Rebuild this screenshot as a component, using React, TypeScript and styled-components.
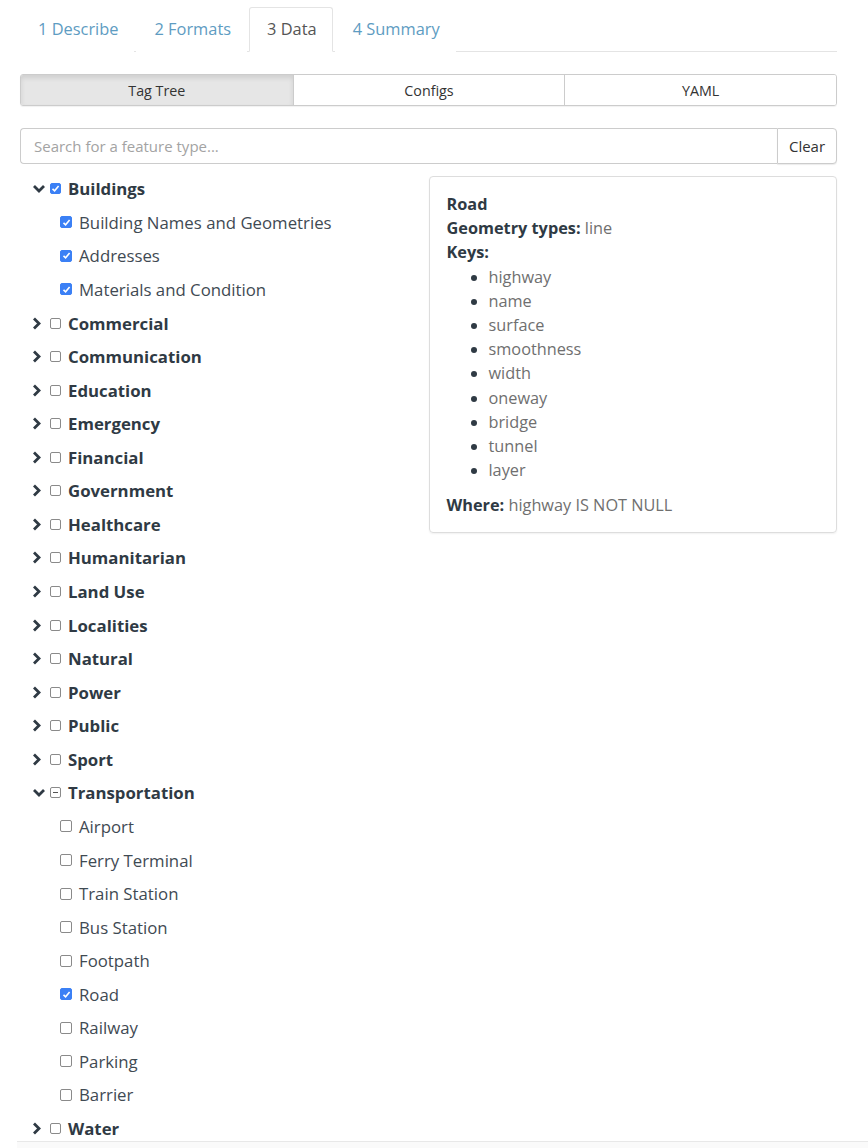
import React from 'react';
import styled, { createGlobalStyle } from 'styled-components';

const COLORS = {
  link: '#5e9cc2',
  text: '#555555',
  dark: '#2f3a44',
  body: '#3f4a53',
  muted: '#6f6f6f',
  border: '#dddddd',
  inputBorder: '#cccccc',
  blue: '#3b80f5',
};

const GlobalStyle = createGlobalStyle`
  html, body {
    margin: 0;
    padding: 0;
    background: #ffffff;
    font-family: 'Open Sans', 'Liberation Sans', sans-serif;
  }
  * { box-sizing: border-box; }
`;

const Page = styled.div`
  padding: 7px 31px 0 20px;
`;

const TabBar = styled.ul`
  display: flex;
  list-style: none;
  margin: 0;
  padding: 0;
  border-bottom: 1px solid #e4e4e4;
`;

const Tab = styled.li<{ $active?: boolean }>`
  height: 45px;
  margin-right: 2px;
  margin-bottom: -1px;
  padding: 0 15px 2px 17px;
  display: flex;
  align-items: center;
  font-size: 16.4px;
  color: ${(p) => (p.$active ? COLORS.text : COLORS.link)};
  background: #fff;
  border: 1px solid ${(p) => (p.$active ? '#e4e4e4' : 'transparent')};
  border-bottom-color: ${(p) => (p.$active ? '#fff' : 'transparent')};
  border-radius: 3px 3px 0 0;
`;

const Segmented = styled.div`
  display: grid;
  grid-template-columns: 1fr 1fr 1fr;
  margin-top: 22px;
  height: 32px;
  border: 1px solid ${COLORS.inputBorder};
  border-radius: 3px;
  overflow: hidden;
  box-shadow: 0 1px 1px rgba(0, 0, 0, 0.06);
`;

const SegButton = styled.div<{ $active?: boolean }>`
  display: flex;
  align-items: center;
  justify-content: center;
  font-size: 14.3px;
  color: #333;
  background: ${(p) => (p.$active ? '#e6e6e6' : '#fff')};
  box-shadow: ${(p) => (p.$active ? 'inset 0 3px 5px rgba(0,0,0,0.1)' : 'none')};
  & + & {
    border-left: 1px solid ${COLORS.inputBorder};
  }
`;

const SearchGroup = styled.div`
  display: flex;
  margin-top: 22px;
  height: 36px;
`;

const SearchInput = styled.input`
  flex: 1;
  height: 100%;
  border: 1px solid ${COLORS.inputBorder};
  border-right: none;
  border-radius: 4px 0 0 4px;
  padding: 0 13px;
  font-family: inherit;
  font-size: 15px;
  color: #333;
  outline: none;
  &::placeholder {
    color: #a3a3a3;
  }
`;

const ClearButton = styled.button`
  width: 60px;
  height: 100%;
  border: 1px solid ${COLORS.inputBorder};
  border-radius: 0 4px 4px 0;
  background: #fff;
  font-family: inherit;
  font-size: 15px;
  color: #333;
  box-shadow: 0 1px 1px rgba(0, 0, 0, 0.08);
  padding: 0;
`;

const Columns = styled.div`
  display: grid;
  grid-template-columns: 1fr 1fr;
`;

const Tree = styled.div`
  padding-top: 8px;
`;

const Row = styled.div<{ $child?: boolean }>`
  display: flex;
  align-items: center;
  height: 33.57px;
  padding-left: ${(p) => (p.$child ? '40px' : '12px')};
`;

const Chevron = styled.span`
  width: 14px;
  height: 14px;
  margin-right: 4px;
  display: flex;
  align-items: center;
  justify-content: flex-start;
`;

const Box = styled.span<{ $state: 'on' | 'off' | 'mixed'; $child?: boolean }>`
  width: ${(p) => (p.$child ? '12px' : '11px')};
  height: ${(p) => (p.$child ? '12px' : '11px')};
  margin-right: 7px;
  border-radius: 2px;
  display: flex;
  align-items: center;
  justify-content: center;
  flex: none;
  background: ${(p) => (p.$state === 'on' ? COLORS.blue : '#fff')};
  border: 1px solid ${(p) => (p.$state === 'on' ? COLORS.blue : '#8a8a8a')};
`;

const Label = styled.span<{ $bold?: boolean }>`
  font-size: 16.8px;
  font-weight: ${(p) => (p.$bold ? 700 : 400)};
  color: ${(p) => (p.$bold ? COLORS.dark : COLORS.body)};
  white-space: nowrap;
`;

const Panel = styled.div`
  align-self: start;
  margin-top: 12px;
  border: 1px solid ${COLORS.border};
  border-radius: 4px;
  box-shadow: 0 1px 2px rgba(0, 0, 0, 0.06);
  padding: 15px 17px 14px 17px;
  font-size: 16.3px;
  line-height: 24.2px;
  color: ${COLORS.muted};
`;

const Line = styled.div``;

const Strong = styled.b`
  color: ${COLORS.dark};
  font-weight: 700;
`;

const KeyList = styled.ul`
  margin: 0 0 11px 0;
  padding-left: 42px;
  li::marker {
    color: ${COLORS.dark};
  }
`;

const Footer = styled.div`
  position: fixed;
  left: 17px;
  right: 0;
  bottom: 0;
  height: 7px;
  border-top: 1px solid #e8e8e8;
  background: #fafafa;
`;

type Check = 'on' | 'off' | 'mixed';

const ChevronIcon = ({ open }: { open: boolean }) =>
  open ? (
    <svg width="14" height="10" viewBox="0 0 14 10">
      <polyline points="2,2 7,7 12,2" fill="none" stroke="#2f3a44" strokeWidth="2.8" />
    </svg>
  ) : (
    <svg width="10" height="13" viewBox="0 0 10 13">
      <polyline points="2,1.5 7,6.5 2,11.5" fill="none" stroke="#2f3a44" strokeWidth="2.8" />
    </svg>
  );

const CheckBox = ({ state, child }: { state: Check; child?: boolean }) => (
  <Box $state={state} $child={child}>
    {state === 'on' && (
      <svg width="9" height="9" viewBox="0 0 9 9">
        <polyline points="1.5,4.8 3.6,6.8 7.6,2" fill="none" stroke="#fff" strokeWidth="1.6" />
      </svg>
    )}
    {state === 'mixed' && (
      <svg width="7" height="7" viewBox="0 0 7 7">
        <line x1="1" y1="3.5" x2="6" y2="3.5" stroke="#555" strokeWidth="1" />
      </svg>
    )}
  </Box>
);

type Group = { name: string; state: Check; open?: boolean; children?: { name: string; on?: boolean }[] };

const groups: Group[] = [
  {
    name: 'Buildings',
    state: 'on',
    open: true,
    children: [
      { name: 'Building Names and Geometries', on: true },
      { name: 'Addresses', on: true },
      { name: 'Materials and Condition', on: true },
    ],
  },
  { name: 'Commercial', state: 'off' },
  { name: 'Communication', state: 'off' },
  { name: 'Education', state: 'off' },
  { name: 'Emergency', state: 'off' },
  { name: 'Financial', state: 'off' },
  { name: 'Government', state: 'off' },
  { name: 'Healthcare', state: 'off' },
  { name: 'Humanitarian', state: 'off' },
  { name: 'Land Use', state: 'off' },
  { name: 'Localities', state: 'off' },
  { name: 'Natural', state: 'off' },
  { name: 'Power', state: 'off' },
  { name: 'Public', state: 'off' },
  { name: 'Sport', state: 'off' },
  {
    name: 'Transportation',
    state: 'mixed',
    open: true,
    children: [
      { name: 'Airport' },
      { name: 'Ferry Terminal' },
      { name: 'Train Station' },
      { name: 'Bus Station' },
      { name: 'Footpath' },
      { name: 'Road', on: true },
      { name: 'Railway' },
      { name: 'Parking' },
      { name: 'Barrier' },
    ],
  },
  { name: 'Water', state: 'off' },
];

const roadKeys = ['highway', 'name', 'surface', 'smoothness', 'width', 'oneway', 'bridge', 'tunnel', 'layer'];

const App: React.FC = () => (
  <Page>
    <GlobalStyle />
    <TabBar>
      <Tab>1 Describe</Tab>
      <Tab>2 Formats</Tab>
      <Tab $active>3 Data</Tab>
      <Tab>4 Summary</Tab>
    </TabBar>

    <Segmented>
      <SegButton $active>Tag Tree</SegButton>
      <SegButton>Configs</SegButton>
      <SegButton>YAML</SegButton>
    </Segmented>

    <SearchGroup>
      <SearchInput placeholder="Search for a feature type..." />
      <ClearButton>Clear</ClearButton>
    </SearchGroup>

    <Columns>
      <Tree>
        {groups.map((g) => (
          <React.Fragment key={g.name}>
            <Row>
              <Chevron>
                <ChevronIcon open={!!g.open} />
              </Chevron>
              <CheckBox state={g.state} />
              <Label $bold>{g.name}</Label>
            </Row>
            {g.open &&
              g.children?.map((c) => (
                <Row $child key={c.name}>
                  <CheckBox state={c.on ? 'on' : 'off'} child />
                  <Label>{c.name}</Label>
                </Row>
              ))}
          </React.Fragment>
        ))}
      </Tree>

      <Panel>
        <Line>
          <Strong>Road</Strong>
        </Line>
        <Line>
          <Strong>Geometry types:</Strong> line
        </Line>
        <Line>
          <Strong>Keys:</Strong>
        </Line>
        <KeyList>
          {roadKeys.map((k) => (
            <li key={k}>{k}</li>
          ))}
        </KeyList>
        <Line>
          <Strong>Where:</Strong> highway IS NOT NULL
        </Line>
      </Panel>
    </Columns>
    <Footer />
  </Page>
);

export default App;
